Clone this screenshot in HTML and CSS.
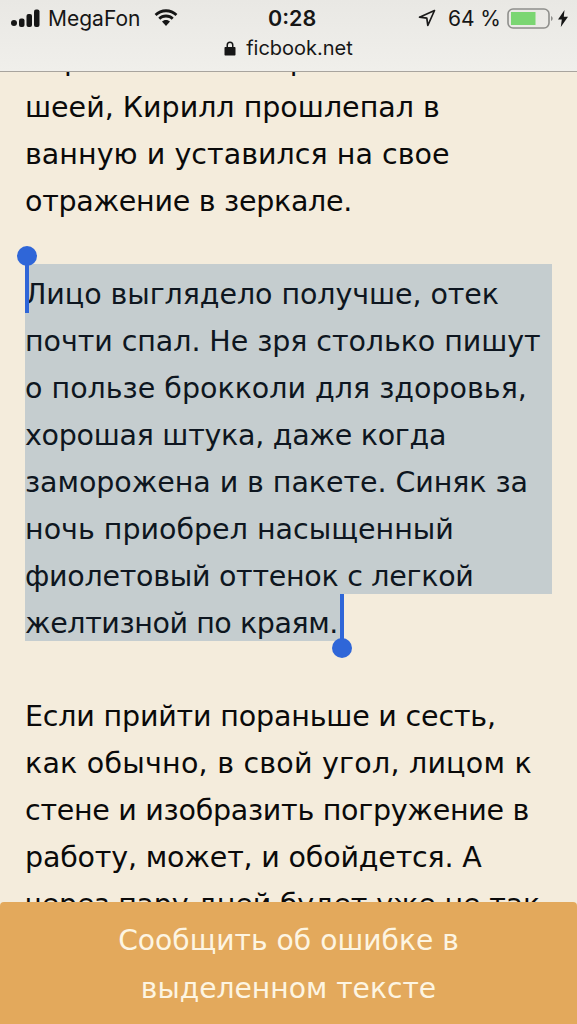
FILE: index.html
```html
<!DOCTYPE html>
<html lang="ru">
<head>
<meta charset="utf-8">
<title>ficbook.net</title>
<link rel="stylesheet" href="styles.css">
</head>
<body>
<header class="browser-bar">
  <div class="status-row">
    <div class="status-left">
      <svg class="signal" viewBox="0 0 31 19" width="31" height="19"><circle cx="3" cy="14" r="3"/><rect x="8" y="9.5" width="5.5" height="8.5" rx="2"/><rect x="15.5" y="5" width="5.5" height="13" rx="2"/><rect x="23" y="0.5" width="5.5" height="17.5" rx="2"/></svg>
      <span class="carrier">MegaFon</span>
      <svg class="wifi" viewBox="0 0 26 19" width="26" height="19"><path d="M13 3.2c3.700 0 7 1.400 9.500 3.800l1.900-2.100C21.400 2 17.400.3 13 .3S4.600 2 1.600 4.900L3.500 7c2.500-2.400 5.800-3.800 9.500-3.800z"/><path d="M13 8.600c2.200 0 4.200.8 5.700 2.200l2-2.100C18.600 6.700 16 5.600 13 5.600S7.400 6.700 5.300 8.700l2 2.100c1.500-1.400 3.500-2.200 5.700-2.200z"/><path d="M13 11c-1.600 0-3 .6-4 1.600l4 4.400 4-4.400c-1-1-2.400-1.600-4-1.600z"/></svg>
    </div>
    <span class="clock">0:28</span>
    <div class="status-right">
      <svg class="locate" viewBox="0 0 18 18" width="18" height="18"><path d="M16.500 1.500 1.500 8.200l7.300.9 1 7.400z" fill="none" stroke="#1a1a1a" stroke-width="1.700" stroke-linejoin="round"/></svg>
      <span class="battery-text">64 %</span>
      <svg class="battery" viewBox="0 0 47 21" width="47" height="21"><rect x="1" y="1" width="41" height="19" rx="5" fill="none" stroke="#8f8f8c" stroke-width="1.600"/><rect x="4" y="4" width="24.500" height="13" fill="#7bd672"/><path d="M44 8v5c1-.4 1.700-1.400 1.700-2.500S45 8.400 44 8z" fill="#8f8f8c"/></svg>
      <svg class="bolt" viewBox="0 0 10 17" width="10" height="17"><path d="M6.500 0 0 9.500h3.800L2.800 17 10 6.800H5.800z"/></svg>
    </div>
  </div>
  <div class="url-row">
    <svg class="lock" viewBox="0 0 12 15" width="12" height="15"><path d="M1.500 6h1V4a3.500 3.500 0 0 1 7 0v2h1c.6 0 1 .4 1 1v6.500c0 .6-.4 1-1 1h-9c-.6 0-1-.4-1-1V7c0-.6.4-1 1-1zM4 6h4V4a2 2 0 0 0-4 0z"/></svg>
    <span class="url">ficbook.net</span>
  </div>
</header>

<main class="reader">
  <div class="reader-content">
    <p class="para">
      <span class="line">Перевязав и потер больной</span>
      <span class="line">шеей, Кирилл прошлепал в</span>
      <span class="line fit-l1">ванную и уставился на свое</span>
      <span class="line fit-t3">отражение в зеркале.</span>
    </p>

    <div class="selection">
      <span class="line fit-t1">Лицо выглядело получше, отек</span>
      <span class="line fit-t1">почти спал. Не зря столько пишут</span>
      <span class="line">о пользе брокколи для здоровья,</span>
      <span class="line fit-t3">хорошая штука, даже когда</span>
      <span class="line fit-t1">заморожена и в пакете. Синяк за</span>
      <span class="line">ночь приобрел насыщенный</span>
      <span class="line fit-t3">фиолетовый оттенок с легкой</span>
      <span class="line fit-t4">желтизной по краям.</span>
      <span class="handle handle-start"></span>
      <span class="handle handle-end"></span>
    </div>

    <p class="para">
      <span class="line fit-t2">Если прийти пораньше и сесть,</span>
      <span class="line fit-l2">как обычно, в свой угол, лицом к</span>
      <span class="line fit-t3">стене и изобразить погружение в</span>
      <span class="line fit-t2">работу, может, и обойдется. А</span>
      <span class="line fit-t2">через пару дней будет уже не так</span>
    </p>
  </div>
</main>

<button class="report-btn" type="button">Сообщить об ошибке в<br>выделенном тексте</button>
</body>
</html>
```
FILE: styles.css
```css
* { box-sizing: border-box; }
html, body { margin: 0; padding: 0; }
body {
  width: 577px;
  height: 1024px;
  overflow: hidden;
  background: #f4ecdc;
  color: #0a0a0a;
  font-family: "DejaVu Sans", sans-serif;
  position: relative;
  display: flex;
  flex-direction: column;
}

/* Browser chrome */
.browser-bar {
  flex: 0 0 72px;
  background: linear-gradient(#e9e8e4, #f0efeb);
  border-bottom: 1px solid #a8a49e;
  font-family: Inter, sans-serif;
  color: #161616;
}
.status-row {
  height: 36px;
  padding: 0 9px 0 11px;
  display: grid;
  grid-template-columns: 257px auto 1fr;
  align-items: center;
}
.status-left { display: flex; align-items: center; gap: 6px; }
.status-right { display: flex; align-items: center; justify-content: flex-end; }
.signal, .wifi, .bolt, .lock { fill: #161616; }
.carrier { font-size: 21px; }
.wifi { margin-left: 7px; }
.clock { font-size: 21.500px; font-weight: 600; }
.locate { margin-right: 12px; }
.battery-text { font-size: 21px; margin-right: 6px; }
.bolt { margin-left: 4px; }
.url-row {
  height: 24px;
  display: flex;
  align-items: center;
  justify-content: center;
  gap: 10px;
}
.url { font-size: 20px; }

/* Reading area: the first line runs under the bar */
.reader {
  flex: 1;
  min-height: 0;
  overflow: hidden;
}
.reader-content {
  margin-top: -35px;
  padding: 0 25px;
  font-size: 28.500px;
  line-height: 47px;
}
.para { margin: 0; }
.line { display: block; white-space: nowrap; }
.fit-l1 { letter-spacing: 0.04px; }
.fit-l2 { letter-spacing: 0.22px; }
.fit-t1 { letter-spacing: -0.07px; }
.fit-t2 { letter-spacing: -0.18px; }
.fit-t3 { letter-spacing: -0.28px; }
.fit-t4 { letter-spacing: -0.42px; }

/* Text selection */
.selection {
  position: relative;
  isolation: isolate;
  margin: 39px 0 46px;
  padding-top: 7px;
  color: #0e1620;
}
.selection::before,
.selection::after {
  content: "";
  position: absolute;
  left: 0;
  background: #c5cdcf;
  z-index: -1;
}
.selection::before { top: 0; width: 100%; height: 330px; }
.selection::after { top: 330px; width: 316px; height: 47px; }
.handle {
  position: absolute;
  width: 3.500px;
  background: #2f66d8;
}
.handle::after {
  content: "";
  position: absolute;
  left: -8.250px;
  width: 20px;
  height: 20px;
  border-radius: 50%;
  background: #2f66d8;
}
.handle-start { left: 0; top: 0; height: 49px; }
.handle-start::after { top: -18px; }
.handle-end { left: 315px; top: 330px; height: 46px; }
.handle-end::after { bottom: -18px; }

/* Bottom action */
.report-btn {
  position: absolute;
  left: 0; right: 0; bottom: 0;
  height: 122px;
  padding: 4px 0 0;
  border: 0;
  border-radius: 4px 4px 0 0;
  background: #e3a95c;
  color: #fdf5e2;
  font-family: "DejaVu Sans", sans-serif;
  font-size: 28.200px;
  line-height: 48px;
  text-align: center;
}
```
